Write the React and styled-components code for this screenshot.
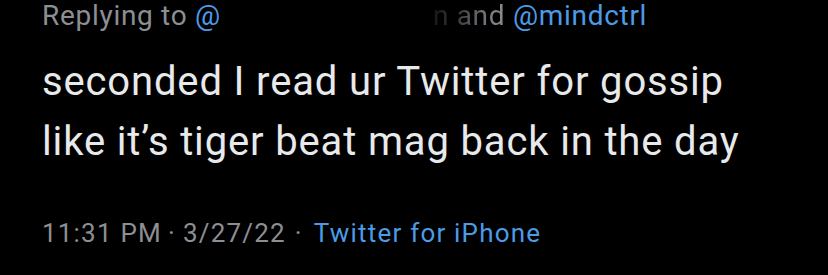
import React from 'react'
import styled, { createGlobalStyle } from 'styled-components'

const GlobalStyle = createGlobalStyle`
  html, body {
    margin: 0;
    padding: 0;
    background: #000;
  }
  body {
    font-family: Roboto, "Liberation Sans", sans-serif;
    -webkit-font-smoothing: antialiased;
  }
`

const Tweet = styled.article`
  width: 828px;
  height: 275px;
  box-sizing: border-box;
  background: #000;
  padding: 0 0 0 42px;
  display: flex;
  flex-direction: column;
  overflow: hidden;
`

const ReplyLine = styled.div`
  padding-top: 2px;
  font-size: 28px;
  line-height: 28px;
  letter-spacing: 0.7px;
  color: #8b8f93;
  white-space: nowrap;
`

const Mention = styled.span`
  color: #4c9be6;
`

const Hidden = styled.span`
  display: inline-block;
  width: ${(p) => p.width}px;
`

// the name is blotted out, only a faint tail of it remains
const Faded = styled.span`
  background: linear-gradient(to right, #141618 0%, #3c3f42 35%, #6f7377 70%, #8b8f93 100%);
  -webkit-background-clip: text;
  background-clip: text;
  color: transparent;
`

const Body = styled.p`
  margin: 22px 0 0;
  font-size: 40px;
  line-height: 60px;
  color: #e7e9ea;
  letter-spacing: 0.85px;
  white-space: nowrap;
`

const Meta = styled.div`
  margin-top: 46px;
  font-size: 26px;
  line-height: 30px;
  letter-spacing: 1.2px;
  color: #8b8f93;
  white-space: nowrap;
`

const Dot = styled.span`
  margin: 0 ${(p) => (p.wide ? 11 : 7)}px 0 ${(p) => (p.wide ? 9 : 6)}px;
`

export default function App() {
  return (
    <>
      <GlobalStyle />
      <Tweet>
        <ReplyLine>
          Replying to <Mention>@</Mention>
          <Hidden width={212} />
          <Faded>n and</Faded> <Mention>@mindctrl</Mention>
        </ReplyLine>
        <Body>
          seconded I read ur Twitter for gossip
          <br />
          like it’s tiger beat mag back in the day
        </Body>
        <Meta>
          11:31 PM<Dot>·</Dot>3/27/22<Dot wide>·</Dot>
          <Mention>Twitter for iPhone</Mention>
        </Meta>
      </Tweet>
    </>
  )
}
